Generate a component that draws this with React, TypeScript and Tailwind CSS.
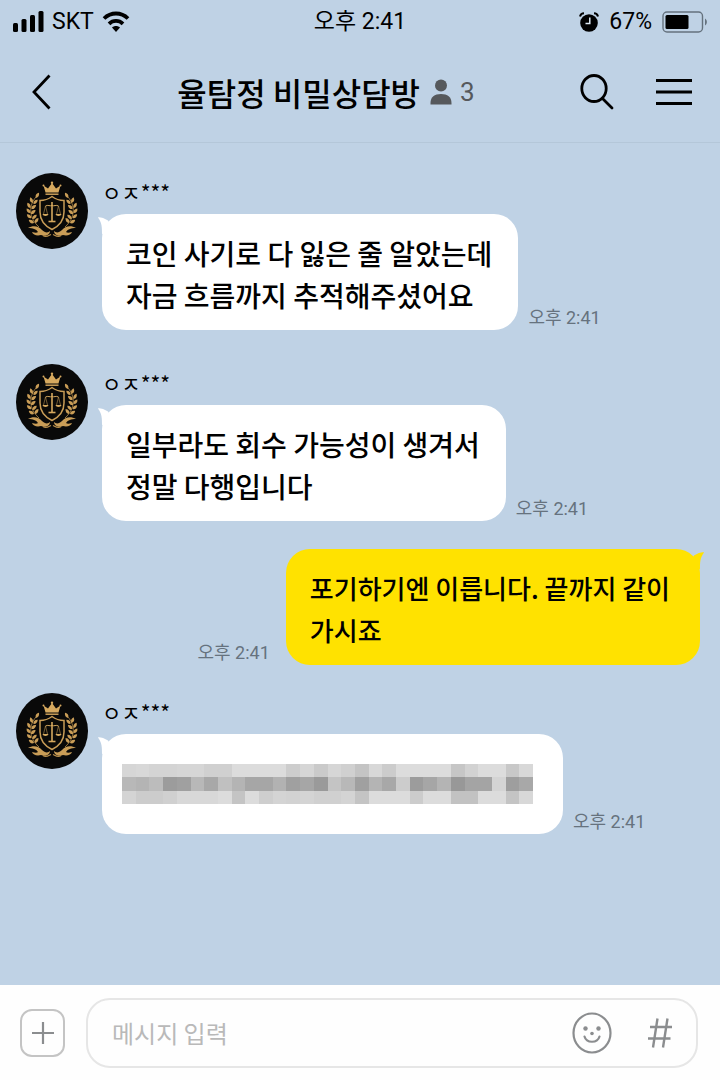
import React from 'react';

interface Message {
  id: number;
  mine?: boolean;
  text?: string;
  className: string;
}

const SENDER = 'ㅇㅈ***';
const TIME = '오후 2:41';

const messages: Message[] = [
  { id: 1, text: '코인 사기로 다 잃은 줄 알았는데\n자금 흐름까지 추적해주셨어요', className: '' },
  { id: 2, text: '일부라도 회수 가능성이 생겨서\n정말 다행입니다', className: 'mt-[34px]' },
  { id: 3, mine: true, text: '포기하기엔 이릅니다. 끝까지 같이\n가시죠', className: 'mt-7' },
  { id: 4, className: 'mt-7' },
];

// grey levels of the masked message, one string per row, two hex digits per cell
const MOSAIC = [
  'd6d8d4d4d6d6d0d0dcdcdcdccdd6cad6d0c4d8ccdcdcdcdcc6d2dcdcc8d8',
  'b8b4bc9ca0b8a8c0b4a6a6b2a0a69ac4b8a0b4a8cc9ca6b498a4a4d49ea8',
  'd4ccccd0d8d8d8dcc4dcced4d2d4d0d0d4c4dcdcdcccdcdcc2c2dcdcc4d8',
];

// x, y and angle of each leaf on the left branch
const LEAVES = [
  [20, 25, -60], [16.5, 30, -110], [14.5, 35, -120], [14.5, 40, -130], [15.5, 45, -140], [18, 50, -150],
  [17.5, 31, -45], [15.5, 36, -40], [15, 41, -40], [16.5, 46, -45], [19, 50, -55],
];

const Laurel: React.FC = () => (
  <g>
    <path d="M20 24C13 32 12 44 23 54" fill="none" stroke="#b98f4b" strokeWidth="0.8" />
    {LEAVES.map(([x, y, angle], index) => (
      <path
        key={index}
        d="M0 0C1.5 -2.2 4 -2.2 6 0C4 1.8 1.5 1.8 0 0Z"
        transform={`translate(${x} ${y}) rotate(${angle})`}
        fill="#c99d57"
      />
    ))}
    <path
      d="M12 55C17 52 23 53 26 57C29 60 32 60 34 58C34 62 29 64 25 62C21 63 17 62 16 59C19 60 21 60 22 59C20 56 17 55 12 55Z"
      fill="#c99d57"
    />
    <path d="M27 62.500C30 65 32 63 35 61.500" fill="none" stroke="#b98f4b" strokeWidth="1.200" />
  </g>
);

const Avatar: React.FC = () => (
  <svg viewBox="0 0 72 76" className="h-[76px] w-[72px] shrink-0" aria-hidden="true">
    <ellipse cx="36" cy="38" rx="36" ry="38" fill="#090909" />
    <path d="M29.500 19.500L27.500 12.500L32 15.500L36 10L40 15.500L44.500 12.500L42.500 19.500Z" fill="#d6a95f" />
    <path d="M29.500 21.200H42.500" stroke="#d6a95f" strokeWidth="1.400" />
    <circle cx="27.500" cy="12.500" r="1" fill="#d6a95f" />
    <circle cx="36" cy="9.800" r="1.200" fill="#d6a95f" />
    <circle cx="44.500" cy="12.500" r="1" fill="#d6a95f" />
    <Laurel />
    <g transform="matrix(-1 0 0 1 72 0)">
      <Laurel />
    </g>
    <path
      d="M36 23.500C32 26.500 28 27.500 24 27.500V39C24 47 28 52.500 36 56.500C44 52.500 48 47 48 39V27.500C44 27.500 40 26.500 36 23.500Z"
      fill="#0b0a08"
      stroke="#c99d57"
      strokeWidth="1.500"
    />
    <g fill="none" stroke="#d6a95f" strokeWidth="1">
      <path d="M36 29V48" strokeWidth="1.600" />
      <path d="M29.500 33C32 31.500 34 33.500 36 32.500C38 33.500 40 31.500 42.500 33" />
      <path d="M29.500 33L27.500 41M29.500 33L31.500 41M42.500 33L40.500 41M42.500 33L44.500 41" strokeWidth="0.500" />
      <path d="M32.500 48.500H39.500" strokeWidth="1.600" />
    </g>
    <path d="M26.500 41H32.500C32 43.500 27 43.500 26.500 41ZM39.500 41H45.500C45 43.500 40 43.500 39.500 41Z" fill="#d6a95f" />
  </svg>
);

const Mosaic: React.FC = () => (
  <svg viewBox="0 0 30 3" preserveAspectRatio="none" className="h-10 w-full" shapeRendering="crispEdges" aria-hidden="true">
    {MOSAIC.map((row, y) =>
      (row.match(/../g) ?? []).map((level, x) => (
        <rect key={`${x}-${y}`} x={x} y={y} width="1" height="1" fill={`#${level}${level}${level}`} />
      )),
    )}
  </svg>
);

const Tail: React.FC<{ mine?: boolean }> = ({ mine }) => (
  <svg
    viewBox="0 0 18 18"
    className={mine ? 'absolute -right-1 top-[3px] size-[18px] -scale-x-100' : 'absolute -left-1 top-[3px] size-[18px]'}
    aria-hidden="true"
  >
    <path d="M0 0.500C0 -0.500 6 0.500 10 3.500L16 14L4 17C4 10 4 6 0 0.500Z" fill={mine ? '#ffe200' : '#fff'} />
  </svg>
);

const Time: React.FC = () => (
  <time className="shrink-0 font-[Roboto,'Noto_Sans_CJK_KR',sans-serif] text-lg leading-6 text-[#66727e]">{TIME}</time>
);

const MessageRow: React.FC<{ message: Message }> = ({ message }) => {
  if (message.mine) {
    return (
      <li className={`flex items-end justify-end gap-4 pr-1 ${message.className}`}>
        <Time />
        <div className="relative rounded-3xl bg-[#ffe200] pb-[14px] pl-6 pr-[30px] pt-[18px]">
          <Tail mine />
          <p className="whitespace-pre-line text-[26px] font-medium leading-[42px]">{message.text}</p>
        </div>
      </li>
    );
  }

  return (
    <li className={`flex items-start gap-[14px] ${message.className}`}>
      <Avatar />
      <div className="min-w-0">
        <h2 className="h-[41px] text-[21px] leading-[38px]">{SENDER}</h2>
        <div className="flex items-end gap-[10px]">
          {message.text ? (
            <div className="relative rounded-3xl bg-white pb-[14px] pl-6 pr-[26px] pt-[18px]">
              <Tail />
              <p className="whitespace-pre-line text-[28px] font-medium leading-[42px]">{message.text}</p>
            </div>
          ) : (
            <div className="relative w-[461px] rounded-3xl bg-white py-[30px] pl-5 pr-[30px]">
              <Tail />
              <Mosaic />
            </div>
          )}
          <Time />
        </div>
      </div>
    </li>
  );
};

const StatusBar: React.FC = () => (
  <div className="grid h-11 grid-cols-3 items-center px-3 font-[Roboto,'Noto_Sans_CJK_KR',sans-serif] text-[23px]">
    <div className="flex items-center gap-2">
      <svg viewBox="0 0 32 22" className="h-[22px] w-8" aria-hidden="true">
        <rect x="1" y="12" width="5" height="9" rx="1.500" />
        <rect x="9.500" y="8" width="5" height="13" rx="1.500" />
        <rect x="18" y="4" width="5" height="17" rx="1.500" />
        <rect x="26.500" y="0" width="5" height="21" rx="1.500" />
      </svg>
      <span>SKT</span>
      <svg viewBox="0 0 28 22" className="h-[22px] w-7" aria-hidden="true">
        <g fill="none" stroke="#000" strokeWidth="3.800">
          <path d="M2 7.500C9 0.800 19 0.800 26 7.500" />
          <path d="M7 12.800C11 9 17 9 21 12.800" />
        </g>
        <path d="M10 16.500C12.300 14.500 15.700 14.500 18 16.500L14 21Z" />
      </svg>
    </div>
    <span className="text-center">{TIME}</span>
    <div className="flex items-center justify-end gap-[10px]">
      <svg viewBox="0 0 20 20" className="size-5" aria-hidden="true">
        <circle cx="10" cy="11" r="8.800" />
        <path d="M1 4.500C1.500 2.500 3 1.300 5 1.300M19 4.500C18.500 2.500 17 1.300 15 1.300" fill="none" stroke="#000" strokeWidth="2" />
        <path d="M10.800 5.500V11.500H6.500" fill="none" stroke="#dce8f3" strokeWidth="1.500" />
      </svg>
      <span>67%</span>
      <svg viewBox="0 0 46 22" className="h-[22px] w-[46px]" aria-hidden="true">
        <rect x="1" y="1" width="39.500" height="20" rx="4" fill="none" stroke="#65727e" strokeWidth="1.400" />
        <rect x="3.500" y="4" width="23" height="14" rx="1.500" />
        <path d="M43 7.500C45.500 9 45.500 13 43 14.500Z" fill="#65727e" />
      </svg>
    </div>
  </div>
);

const Header: React.FC = () => (
  <header className="flex h-[99px] items-center border-b border-[#b4c7d9] pb-[3px] pl-8 pr-7">
    <button type="button" aria-label="뒤로" className="w-10">
      <svg viewBox="0 0 20 36" className="h-9 w-5" fill="none" stroke="#000" strokeWidth="2.800">
        <path d="M17.500 1.500L2 18L17.500 34.500" />
      </svg>
    </button>
    <div className="flex flex-1 items-center justify-center gap-[10px]">
      <h1 className="text-[32px] font-medium leading-10">율탐정 비밀상담방</h1>
      <div className="flex items-center gap-2 font-[Roboto] text-[26px] leading-10 text-[#56595c]">
        <svg viewBox="0 0 22 26" className="h-[26px] w-[22px]" fill="currentColor" aria-hidden="true">
          <circle cx="11" cy="6.500" r="6" />
          <path d="M0.500 25.500V24C0.500 18 4.500 15 11 15S21.500 18 21.500 24V25.500Z" />
        </svg>
        <span>3</span>
      </div>
    </div>
    <div className="flex items-center gap-[42px]">
      <button type="button" aria-label="검색">
        <svg viewBox="0 0 34 36" className="h-9 w-[34px]" fill="none" stroke="#000" strokeWidth="2.800">
          <ellipse cx="14" cy="14.500" rx="12.200" ry="13" />
          <path d="M22.500 24.500L32 34" strokeLinecap="round" />
        </svg>
      </button>
      <button type="button" aria-label="메뉴">
        <svg viewBox="0 0 36 36" className="size-9" stroke="#000" strokeWidth="3.200">
          <path d="M0 6.500H36M0 18H36M0 29.500H36" />
        </svg>
      </button>
    </div>
  </header>
);

const Composer: React.FC = () => (
  <form className="flex h-[95px] items-center gap-[21px] bg-[#fefefe] pl-5 pr-[22px]" onSubmit={(e) => e.preventDefault()}>
    <button
      type="button"
      aria-label="첨부"
      className="flex h-12 w-[45px] shrink-0 items-center justify-center rounded-xl border-2 border-[#c4c4c4]"
    >
      <svg viewBox="0 0 24 24" className="size-6" stroke="#8b8d8f" strokeWidth="2.200" aria-hidden="true">
        <path d="M1 12H23M12 1V23" />
      </svg>
    </button>
    <div className="flex h-[70px] min-w-0 flex-1 items-center rounded-3xl border-2 border-[#e6e6e6] px-6">
      <input
        type="text"
        aria-label="메시지 입력"
        placeholder="메시지 입력"
        className="min-w-0 flex-1 bg-transparent text-2xl outline-none placeholder:text-[#b9b9b9]"
      />
      <button type="button" aria-label="이모티콘" className="mr-9">
        <svg viewBox="0 0 40 42" className="h-[42px] w-10" fill="none" stroke="#8b8d8f" strokeWidth="2.200">
          <ellipse cx="20" cy="21" rx="18.500" ry="19.500" />
          <path d="M12.500 24.500C14.500 31.500 25.500 31.500 27.500 24.500" strokeLinecap="round" />
          <g fill="#8b8d8f" stroke="none">
            <circle cx="13.500" cy="16.500" r="2.200" />
            <circle cx="26.500" cy="16.500" r="2.200" />
            <circle cx="20" cy="21.500" r="1.800" />
          </g>
        </svg>
      </button>
      <button type="button" aria-label="샵검색">
        <svg viewBox="0 0 24 30" className="h-[30px] w-6" fill="none" stroke="#8b8d8f" strokeWidth="2.400">
          <path d="M9.500 0.500L5 29.500M19.500 0.500L15 29.500M2 9H24M0 20.500H22.500" />
        </svg>
      </button>
    </div>
  </form>
);

const App: React.FC = () => (
  <div className="flex min-h-screen flex-col bg-[#bfd2e5] font-['Noto_Sans_CJK_KR',sans-serif] text-black">
    <StatusBar />
    <Header />
    <main className="flex-1 px-4 pb-8 pt-[30px]">
      <ul>
        {messages.map((message) => (
          <MessageRow key={message.id} message={message} />
        ))}
      </ul>
    </main>
    <Composer />
  </div>
);

export default App;
